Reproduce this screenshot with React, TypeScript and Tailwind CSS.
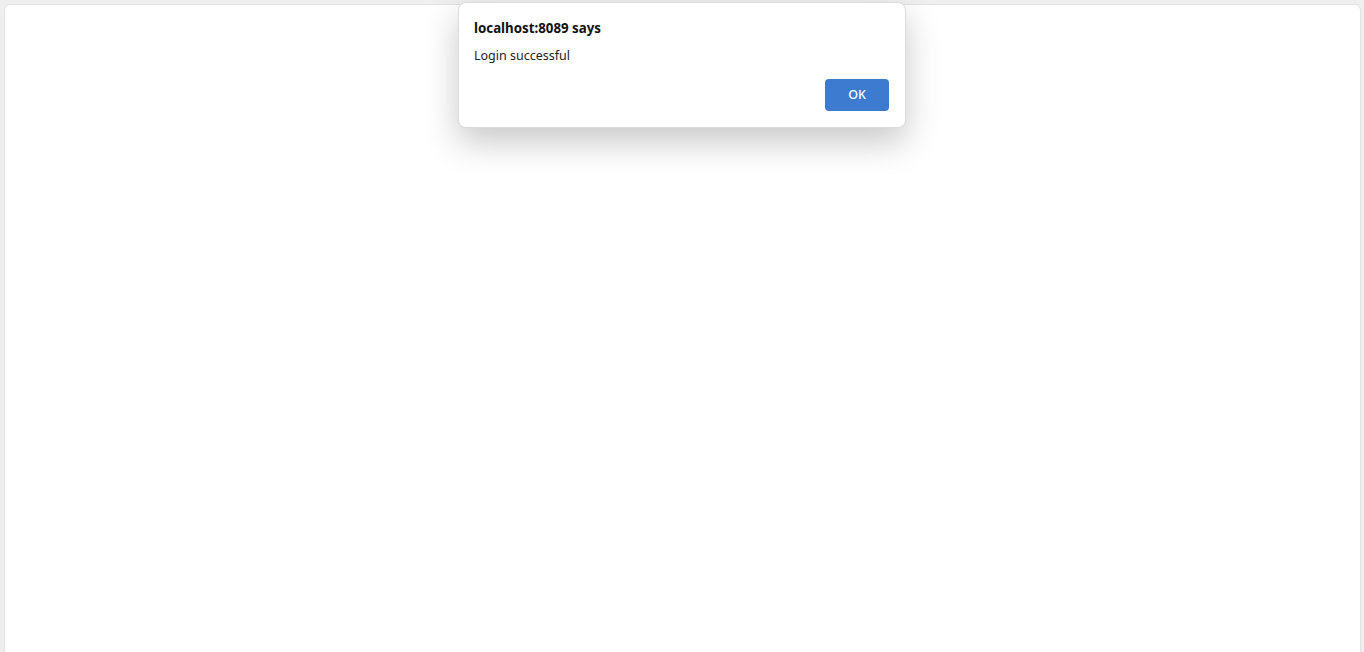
import React from "react";

export default function App() {
  return (
    <div className="relative h-[652px] w-[1364px] overflow-hidden bg-[#efefef] pt-[4px] pl-[4px] pr-[3px]" style={{ fontFamily: '"Noto Sans", "Open Sans", sans-serif' }}>
      <div className="h-[700px] rounded-t-[6px] border border-[#e2e2e2] bg-white" />
      <div className="absolute left-[458px] top-[2px] flex h-[126px] w-[448px] flex-col rounded-[8px] border border-[#dcdcdc] bg-white pl-[15px] pr-[16px] pt-[15px] shadow-[0_14px_34px_rgba(0,0,0,0.22)]">
        <div className="text-[13.3px] font-bold leading-[20px] text-[#111]">localhost:8089 says</div>
        <div className="mt-[9px] text-[12.5px] leading-[18px] text-[#222]">Login successful</div>
        <div className="mt-[14px] flex justify-end">
          <button className="h-[32px] w-[64px] rounded-[4px] bg-[#3c7bd0] text-[12.5px] font-medium text-white">OK</button>
        </div>
      </div>
    </div>
  );
}
